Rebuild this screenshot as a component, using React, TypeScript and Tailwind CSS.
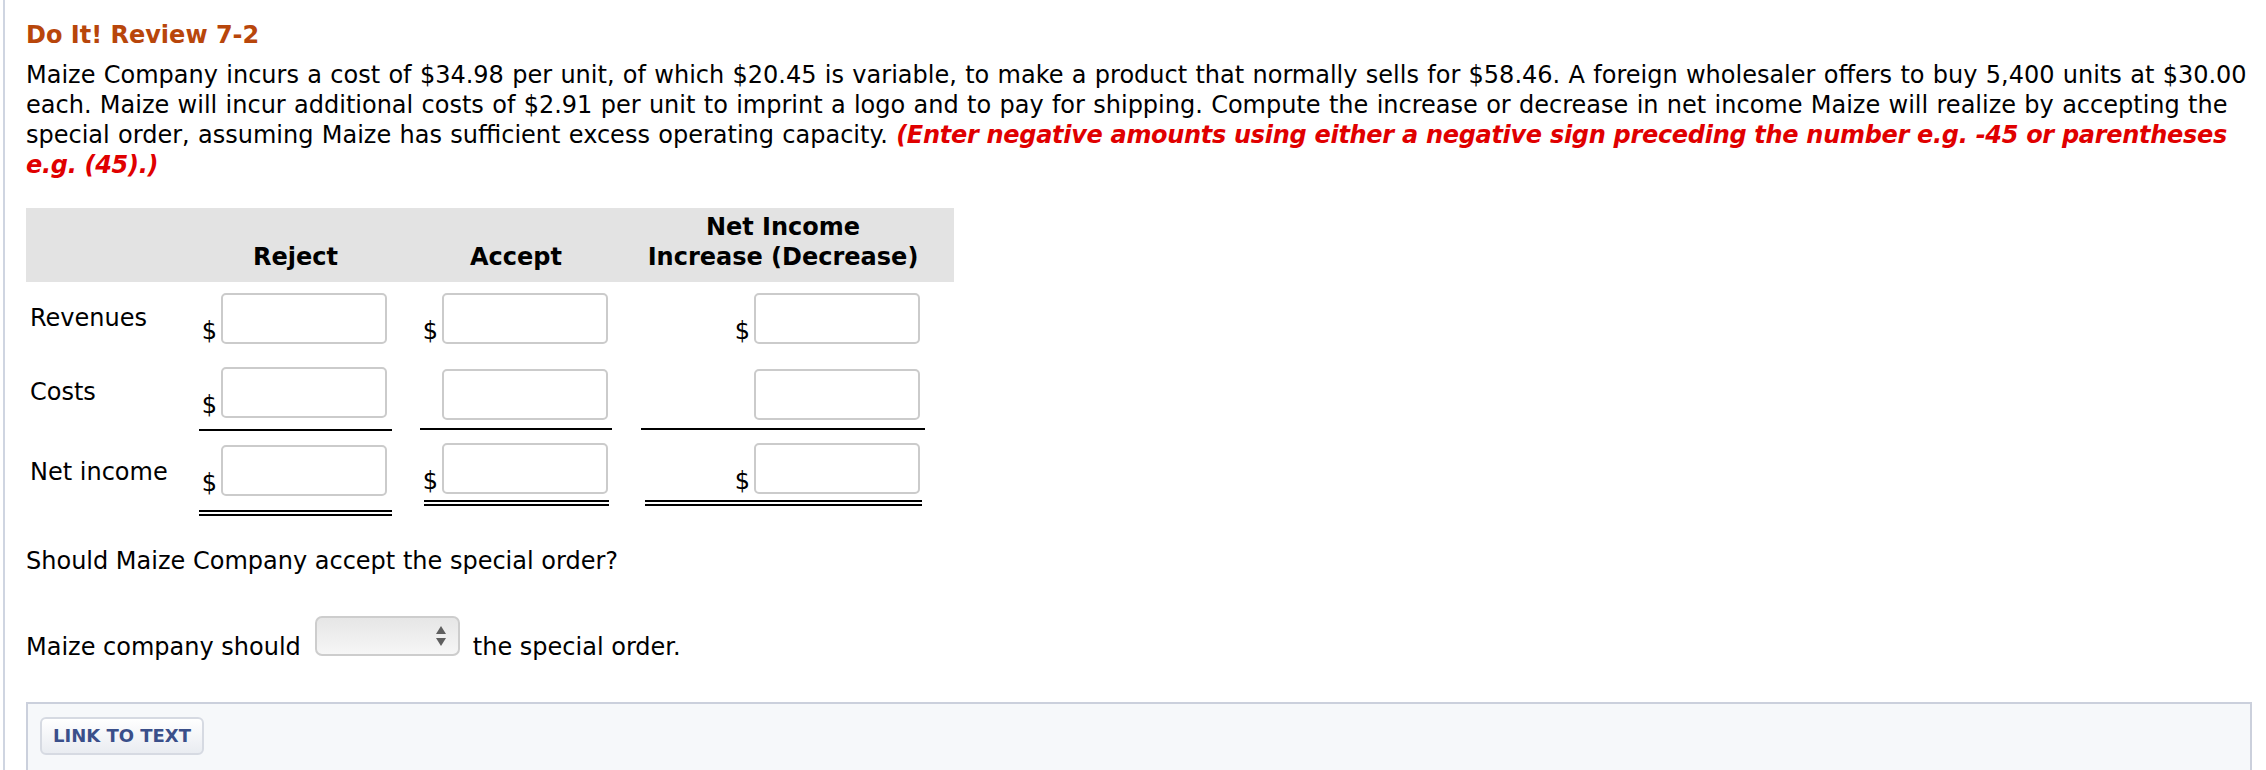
import React from "react";

function Box() {
  return <div className="w-[166px] h-[51px] rounded-[5px] border-2 border-[#cbcbcb] bg-white" />;
}

function Dollar() {
  return <span className="mr-[4px] leading-[26px]">$</span>;
}

export default function App() {
  return (
    <div className="min-h-[770px] bg-white overflow-hidden">
      <div className="ml-[3px] min-h-[770px] border-l-2 border-[#cfd5e1] pl-[21px] pr-[14px] pt-[20px] font-['DejaVu_Sans',Verdana,sans-serif] text-[24px] leading-[30px] text-black">
        <h1 className="text-[24px] font-bold text-[#b8460b]">Do It! Review 7-2</h1>
        <p className="mt-[10px] [word-spacing:0.7px]">
          Maize Company incurs a cost of $34.98 per unit, of which $20.45 is variable, to make a product that normally sells for $58.46. A foreign wholesaler offers to buy 5,400 units at $30.00 each. Maize will incur additional costs of $2.91 per unit to imprint a logo and to pay for shipping. Compute the increase or decrease in net income Maize will realize by accepting the special order, assuming Maize has sufficient excess operating capacity.{" "}
          <span className="font-bold italic tracking-[-0.3px] text-[#e00000] [word-spacing:0px]">
            (Enter negative amounts using either a negative sign preceding the number e.g. -45 or parentheses e.g. (45).)
          </span>
        </p>

        <div className="mt-[28px] w-[928px]">
          <div className="grid grid-cols-[173px_193px_28px_192px_29px_284px_29px] bg-[#e3e3e3] pt-[4px] pb-[10px] font-bold">
            <div />
            <div className="flex items-end justify-center">Reject</div>
            <div />
            <div className="flex items-end justify-center">Accept</div>
            <div />
            <div className="text-center">
              <div>Net Income</div>
              <div>Increase (Decrease)</div>
            </div>
            <div />
          </div>

          {/* Revenues */}
          <div className="grid grid-cols-[173px_193px_28px_192px_29px_284px_29px]">
            <div className="pl-[4px] pt-[21px]">Revenues</div>
            <div className="flex items-end justify-end pt-[11px] pb-[23px] pr-[5px]">
              <Dollar />
              <Box />
            </div>
            <div />
            <div className="flex items-start justify-end pt-[11px] pr-[4px]">
              <div className="flex items-end">
                <Dollar />
                <Box />
              </div>
            </div>
            <div />
            <div className="flex items-start justify-end pt-[11px] pr-[5px]">
              <div className="flex items-end">
                <Dollar />
                <Box />
              </div>
            </div>
            <div />
          </div>

          {/* Costs */}
          <div className="grid grid-cols-[173px_193px_28px_192px_29px_284px_29px]">
            <div className="pl-[4px] pt-[10px]">Costs</div>
            <div className="flex flex-col">
              <div className="flex items-end justify-end pr-[5px]">
                <Dollar />
                <Box />
              </div>
              <div className="mt-[11px] border-t-2 border-black" />
            </div>
            <div />
            <div className="flex flex-col">
              <div className="flex justify-end pt-[2px] pr-[4px]">
                <Box />
              </div>
              <div className="mt-[8px] border-t-2 border-black" />
            </div>
            <div />
            <div className="flex flex-col">
              <div className="flex justify-end pt-[2px] pr-[5px]">
                <Box />
              </div>
              <div className="mt-[8px] border-t-2 border-black" />
            </div>
            <div />
          </div>

          {/* Net income */}
          <div className="grid grid-cols-[173px_193px_28px_192px_29px_284px_29px]">
            <div className="pl-[4px] pt-[26px]">Net income</div>
            <div className="flex flex-col pt-[14px]">
              <div className="flex items-end justify-end pr-[5px]">
                <Dollar />
                <Box />
              </div>
              <div className="mt-[14px] h-[6px] border-t-2 border-b-2 border-black" />
            </div>
            <div />
            <div className="flex flex-col self-start pt-[12px]">
              <div className="flex items-end justify-end pr-[4px]">
                <Dollar />
                <Box />
              </div>
              <div className="mt-[6px] ml-[4px] mr-[3px] h-[6px] border-t-2 border-b-2 border-black" />
            </div>
            <div />
            <div className="flex flex-col self-start pt-[12px]">
              <div className="flex items-end justify-end pr-[5px]">
                <Dollar />
                <Box />
              </div>
              <div className="mt-[6px] ml-[4px] mr-[3px] h-[6px] border-t-2 border-b-2 border-black" />
            </div>
            <div />
          </div>
        </div>

        <p className="mt-[30px]">Should Maize Company accept the special order?</p>

        <div className="mt-[40px] flex items-start">
          <span className="mt-[16px]">Maize company should</span>
          <div className="ml-[14px] flex h-[40px] w-[145px] items-center justify-end rounded-[7px] border-2 border-[#cdcdcd] bg-gradient-to-b from-[#e6e6e6] to-[#f6f6f6] pr-[11px]">
            <svg width="12" height="22" viewBox="0 0 12 22">
              <path d="M6 1 L11 9 L1 9 Z" fill="#5f5f5f" />
              <path d="M6 21 L11 13 L1 13 Z" fill="#5f5f5f" />
            </svg>
          </div>
          <span className="ml-[13px] mt-[16px]">the special order.</span>
        </div>

        <div className="mt-[40px] min-h-[120px] border-2 border-b-0 border-[#cbd0dc] bg-[#f6f8fa] pl-[12px] pt-[13px]">
          <button className="flex h-[38px] w-[164px] items-center rounded-[6px] border-2 border-[#d6dae2] bg-gradient-to-b from-white to-[#e9ecf1] pl-[11px] text-[18px] font-bold leading-[20px] text-[#3a4f8a]">
            LINK TO TEXT
          </button>
        </div>
      </div>
    </div>
  );
}
